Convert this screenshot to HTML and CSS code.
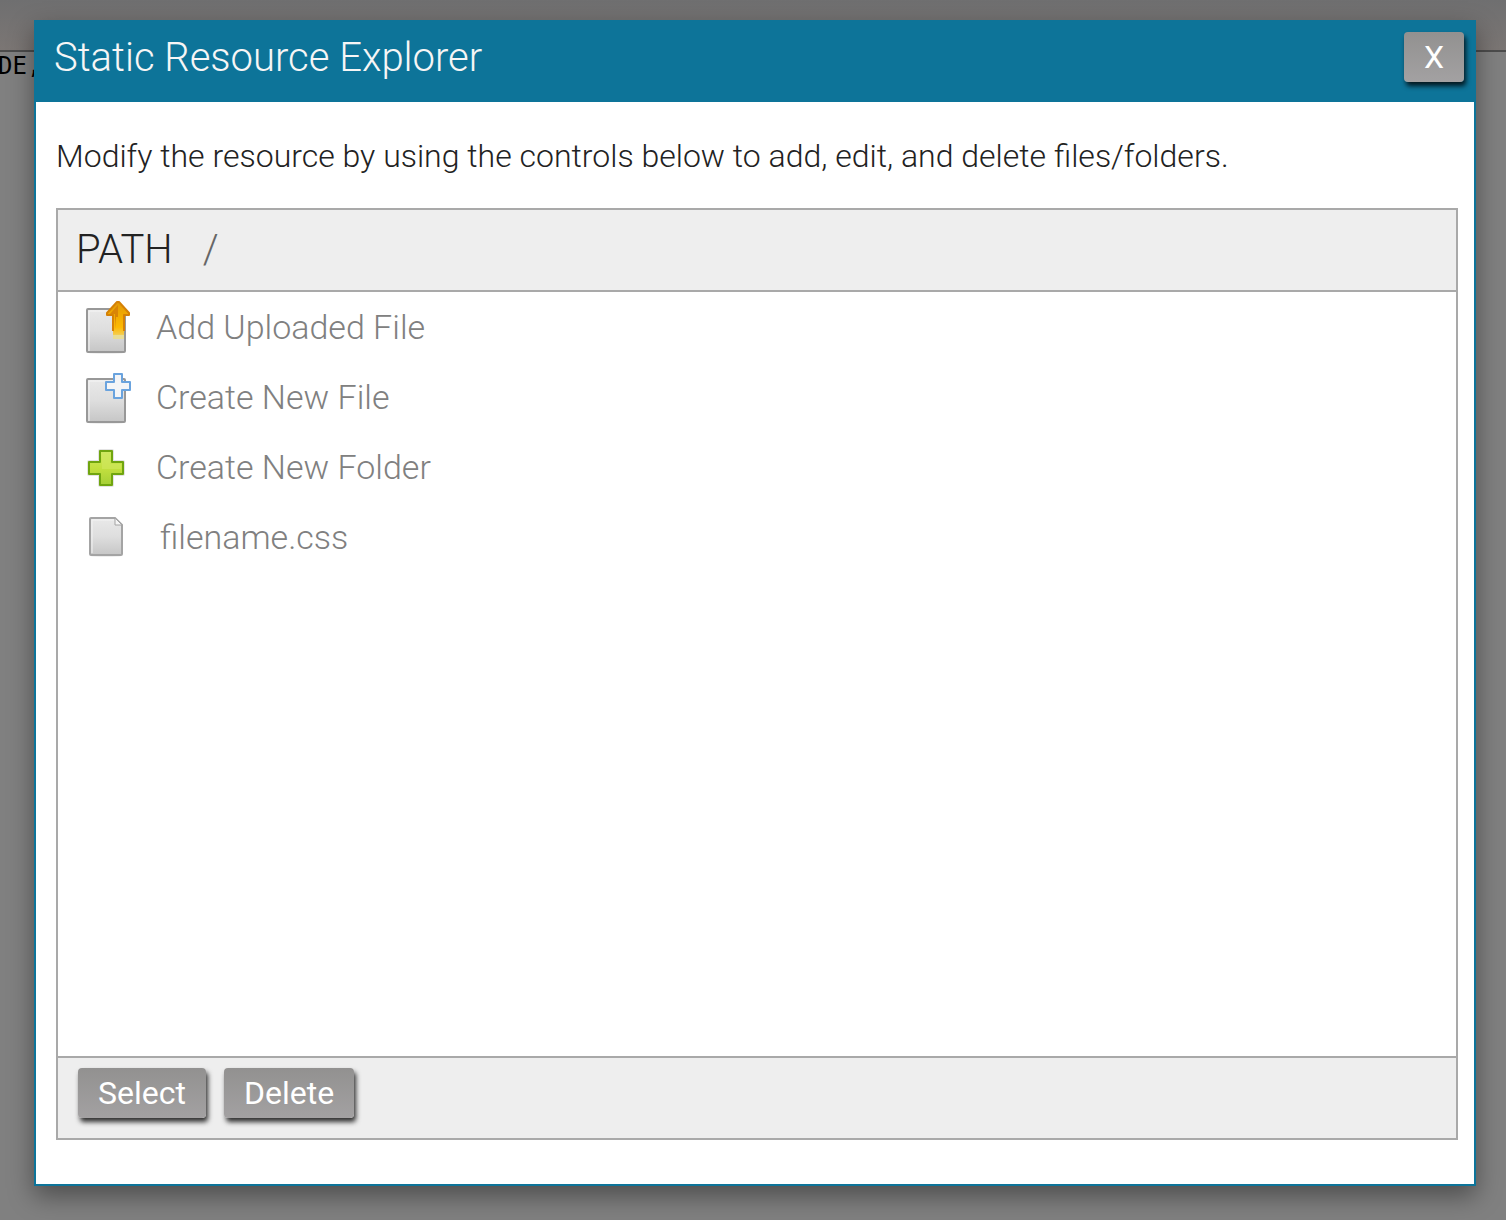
FILE: index.html
```html
<!DOCTYPE html>
<html lang="en">
<head>
<meta charset="utf-8">
<meta name="viewport" content="width=device-width, initial-scale=1">
<title>Static Resource Explorer</title>
<link rel="stylesheet" href="styles.css">
</head>
<body>
<div class="backdrop" aria-hidden="true">
  <div class="backdrop-toolbar"></div>
  <div class="backdrop-code">DE,</div>
</div>
<section class="dialog" role="dialog" aria-labelledby="dialog-title">
  <header class="dialog-header">
    <h1 class="dialog-title" id="dialog-title">Static Resource Explorer</h1>
    <button class="button" type="button" aria-label="Close">X</button>
  </header>
  <div class="dialog-body">
    <p class="intro">Modify the resource by using the controls below to add, edit, and delete files/folders.</p>
    <div class="explorer">
      <div class="path-bar"><span>PATH</span><a class="path-root" href="#">/</a></div>
      <ul class="entries">
        <li><a class="entry" href="#">
          <svg class="icon" viewBox="1 1 50 60" aria-hidden="true">
            <defs>
              <linearGradient id="paper" x1="0" y1="0" x2="0" y2="1"><stop offset="0" stop-color="#e9e9e9"/><stop offset=".5" stop-color="#dedede"/><stop offset="1" stop-color="#c6c6c6"/></linearGradient>
              <linearGradient id="arrow" x1="0" y1="0" x2="0" y2="1"><stop offset="0" stop-color="#e39a06"/><stop offset=".7" stop-color="#fdb901"/><stop offset=".88" stop-color="#f6c944"/><stop offset="1" stop-color="#e9dd87"/></linearGradient>
              <linearGradient id="leaf" x1="0" y1="0" x2="0" y2="1"><stop offset="0" stop-color="#d0e963"/><stop offset=".5" stop-color="#c3e03f"/><stop offset="1" stop-color="#a5cf36"/></linearGradient>
            </defs>
            <ellipse cx="25" cy="56" rx="17" ry="1" fill="#eee"/>
            <rect x="6" y="12" width="38" height="43" rx="1" fill="url(#paper)" stroke="#989898" stroke-width="2"/>
            <path d="M8 54V14H42" fill="none" stroke="#f5f5f5"/>
            <path d="M37 5L48 16V18H43V41H32V18H26V16Z" fill="url(#arrow)"/>
            <path d="M32 34V18H26V16L36 5H38L48 16V18H43V34" fill="none" stroke="#d58106" stroke-width="2" stroke-linejoin="round"/>
            <path d="M37 8V20H35L34 32V17H29Z" fill="#d98507"/>
            <path d="M32 38H43V42H32Z" fill="#e9dd96"/>
          </svg>
          <span>Add Uploaded File</span></a></li>
        <li><a class="entry" href="#">
          <svg class="icon" viewBox="1 1 50 60" aria-hidden="true">
            <ellipse cx="25" cy="56" rx="17" ry="1" fill="#eee"/>
            <rect x="6" y="12" width="38" height="43" rx="1" fill="url(#paper)" stroke="#989898" stroke-width="2"/>
            <path d="M8 54V14H42" fill="none" stroke="#f5f5f5"/>
            <path d="M33 7H41V15H49V23H41V31H33V23H25V15H33Z" fill="#f4f5f7" stroke="#6aa3de" stroke-width="2" stroke-linejoin="round"/>
          </svg>
          <span>Create New File</span></a></li>
        <li><a class="entry" href="#">
          <svg class="icon" viewBox="0 1 50 60" aria-hidden="true">
            <path d="M18 14H30V25H41V37H30V48H18V37H7V25H18Z" fill="none" stroke="#e3e3e3" stroke-width="4" stroke-linejoin="round"/>
            <path d="M18 14H30V25H41V37H30V48H18V37H7V25H18Z" fill="url(#leaf)" stroke="#70a50f" stroke-width="2" stroke-linejoin="round"/>
            <path d="M20 32V16H28V27H39V32Z" fill="#d0e85f" opacity=".6"/>
          </svg>
          <span>Create New Folder</span></a></li>
        <li><a class="entry" href="#">
          <svg class="icon" viewBox="0 2 50 60" aria-hidden="true">
            <ellipse cx="24" cy="50" rx="15" ry="1" fill="#eee"/>
            <path d="M9 12H33L40 19V48Q40 49 39 49H9Q8 49 8 48V13Q8 12 9 12Z" fill="url(#paper)" stroke="#a4a4a4" stroke-width="2"/>
            <path d="M10 47V14H32" fill="none" stroke="#f4f4f4"/>
            <path d="M33 12V19H40Z" fill="#f5f5f5" stroke="#a4a4a4"/>
          </svg>
          <span class="file-name">filename.css</span></a></li>
      </ul>
      <div class="actions">
        <button class="button" type="button">Select</button>
        <button class="button" type="button">Delete</button>
      </div>
    </div>
  </div>
</section>
</body>
</html>
```
FILE: styles.css
```css
* {
  box-sizing: border-box;
}

body {
  display: flex;
  min-height: 100vh;
  margin: 0;
  padding: 20px 30px 34px 34px;
  background: #808080;
  color: #222;
  font-family: Roboto, "Liberation Sans", sans-serif;
  font-weight: 300;
}

.backdrop {
  position: absolute;
  inset: 0;
  overflow: hidden;
}

.backdrop-toolbar {
  height: 52px;
  border-bottom: 2px solid #4c4c4c;
  background: linear-gradient(#6f6f70, #7b7674);
}

.backdrop-code {
  color: #000;
  font: 24px/28px "DejaVu Sans Mono", monospace;
  text-indent: -2px;
}

.dialog {
  position: relative;
  display: flex;
  flex: 1;
  flex-direction: column;
  min-width: 0;
  border: 2px solid #0d7499;
  background: #fff;
  box-shadow: 0 10px 24px rgba(0, 0, 0, 0.4);
}

.dialog-header {
  display: flex;
  align-items: flex-start;
  justify-content: space-between;
  padding: 10px 10px 18px 18px;
  background: #0d7499;
}

.dialog-title {
  margin: 0;
  color: #f6f6f6;
  font-size: 40px;
  font-weight: 300;
  line-height: 52px;
}

.dialog-body {
  display: flex;
  flex: 1;
  flex-direction: column;
  padding: 32px 16px 44px 20px;
}

.intro {
  margin: 0 0 30px;
  font-size: 32px;
  line-height: 44px;
}

.explorer {
  display: flex;
  flex: 1;
  flex-direction: column;
  border: 2px solid #a9a9a9;
}

.path-bar {
  display: flex;
  gap: 30px;
  padding: 0 18px;
  border-bottom: 2px solid #a9a9a9;
  background: #eee;
  font-size: 40px;
  line-height: 80px;
}

.path-root {
  color: #666;
  text-decoration: none;
}

.entries {
  flex: 1;
  margin: 0;
  padding: 0;
  list-style: none;
}

.entry {
  display: flex;
  gap: 24px;
  height: 70px;
  padding: 6px 24px;
  color: #808080;
  font-size: 34px;
  line-height: 58px;
  text-decoration: none;
}

.icon {
  flex: none;
  width: 50px;
  height: 60px;
  overflow: visible;
}

.file-name {
  padding-left: 4px;
}

.actions {
  display: flex;
  gap: 18px;
  padding: 10px 20px 20px;
  border-top: 2px solid #a9a9a9;
  background: #eee;
}

.button {
  height: 50px;
  padding: 0 20px;
  border: 0;
  border-radius: 4px;
  background: linear-gradient(#929190, #a3a1a2);
  box-shadow: 2px 4px 5px rgba(0, 0, 0, 0.8);
  color: #fff;
  font-family: inherit;
  font-size: 32px;
  font-weight: 400;
  line-height: 50px;
}
```
